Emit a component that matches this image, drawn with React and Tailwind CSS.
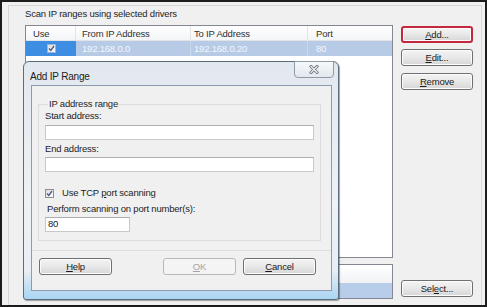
import React from "react";

// Win7 style push button
const Btn = ({ children, className = "", disabled = false }) => (
  <div
    className={`flex items-center justify-center rounded-[3px] border text-[9.5px] leading-none ${
      disabled
        ? "border-[#b5b9bd] bg-[#f4f4f4] text-[#a3a3a3]"
        : "border-[#707070] bg-linear-to-b from-[#f4f4f4] via-[#e8e8e8] to-[#d6d6d6] text-[#1a1a1a] shadow-[inset_0_0_0_1px_#fcfcfc]"
    } ${className}`}
  >
    {children}
  </div>
);

const Check = ({ className = "" }) => (
  <div
    className={`flex h-[9px] w-[9px] items-center justify-center border border-[#8e8f8f] bg-linear-to-br from-[#dcdcdc] to-[#fbfbfb] ${className}`}
  >
    <svg width="7" height="7" viewBox="0 0 7 7">
      <path d="M1 3.6 L2.8 5.4 L6 1" fill="none" stroke="#4a5b8c" strokeWidth="1.4" />
    </svg>
  </div>
);

const Input = ({ value, className = "" }) => (
  <div
    className={`flex h-[15px] items-center border border-[#c5c8cc] border-t-[#abadb3] bg-white pl-[2px] text-[9.5px] text-[#1a1a1a] ${className}`}
  >
    {value}
  </div>
);

const u = (s) => <span className="underline underline-offset-[1px]">{s}</span>;

const App = () => {
  return (
    <div className="relative h-[307px] w-[487px] overflow-hidden border-2 border-[#1c1c1c] bg-[#f0f0f0] font-[Liberation_Sans,Arial,sans-serif] tracking-[-0.2px] text-[#1e1e1e]">
      {/* Outer panel */}
      <div className="ml-[6px] mt-[3px] flex h-[302px] w-[474px] flex-col border border-[#d8d8d8] pl-[16px]">
        <div className="h-[16px] text-[9.5px] leading-[16px] text-[#1e1e1e]">
          Scan IP ranges using selected drivers
        </div>
        <div className="mt-[3px] flex gap-[8px]">
          {/* Left: lists */}
          <div className="flex w-[368px] flex-col gap-[6px]">
            <div className="flex h-[233px] flex-col border border-[#828790] bg-white">
              {/* Header */}
              <div className="flex h-[15px] border-b border-[#e2e3e5] bg-linear-to-b from-white to-[#f4f5f7] text-[9.5px] leading-[15px] text-[#303030]">
                <div className="w-[50px] border-r border-[#e3e4e6] pl-[7px]">Use</div>
                <div className="w-[115px] border-r border-[#e3e4e6] pl-[6px]">From IP Address</div>
                <div className="w-[117px] border-r border-[#e3e4e6] pl-[3px]">To IP Address</div>
                <div className="flex-1 pl-[8px]">Port</div>
              </div>
              {/* Selected row */}
              <div className="flex h-[15px] bg-[#b7cbe7] text-[9.5px] leading-[15px] text-[#f3f6fb]">
                <div className="flex w-[50px] items-center justify-center bg-[#3d8de2]">
                  <Check className="border-[#9bb5d6]" />
                </div>
                <div className="w-[115px] border-r border-[#c9d8ec] pl-[6px]">192.168.0.0</div>
                <div className="w-[117px] border-r border-[#c9d8ec] pl-[3px]">192.168.0.20</div>
                <div className="flex-1 pl-[8px]">80</div>
              </div>
            </div>
            <div className="flex h-[35px] flex-col border border-[#828790] bg-white">
              <div className="h-[18px] bg-linear-to-b from-white to-[#f1f2f4]" />
              <div className="h-[15px] bg-[#b7cde9]" />
            </div>
          </div>
          {/* Right: buttons */}
          <div className="flex w-[72px] flex-col">
            <Btn className="mt-[1px] h-[17px] border-2 !border-[#c3283c]">{u("A")}dd...</Btn>
            <Btn className="mt-[6px] h-[17px]">{u("E")}dit...</Btn>
            <Btn className="mt-[7px] h-[17px]">{u("R")}emove</Btn>
            <Btn className="mt-[190px] h-[17px]">
              Sel{u("e")}ct...
            </Btn>
          </div>
        </div>
      </div>

      {/* Add IP Range dialog window */}
      <div className="absolute left-[21px] top-[59px] flex h-[239px] w-[316px] flex-col rounded-t-[6px] rounded-b-[3px] border border-[#5d6c7d] bg-[linear-gradient(180deg,#e2e8ef_0%,#eef2f6_60%,#e8eef4_88%,#a9d5f2_100%)] shadow-[1px_1px_1px_rgba(0,0,0,0.35)]">
        <div className="flex h-[23px] justify-between pl-[6px] pr-[4px]">
          <span className="mt-[9px] text-[10px] leading-[11px] text-[#1b1b1b]">Add IP Range</span>
          <div className="-mt-px flex h-[17px] w-[40px] items-center justify-center rounded-b-[4px] border border-[#8f9aa7] bg-linear-to-b from-[#f7f9fb] to-[#e3e8ee]">
            <svg width="10" height="9" viewBox="0 0 10 9">
              <path d="M2 1.5 L8 7.5 M8 1.5 L2 7.5" stroke="#6f7780" strokeWidth="3" strokeLinecap="square" />
              <path d="M2 1.5 L8 7.5 M8 1.5 L2 7.5" stroke="#f6f6f6" strokeWidth="1.2" strokeLinecap="square" />
            </svg>
          </div>
        </div>
        {/* Client area */}
        <div className="mb-[8px] ml-[7px] mr-[6px] flex flex-1 flex-col border border-[#8c9bad] bg-[#f0f0f0]">
          <fieldset className="ml-[6px] mr-[10px] mt-[13px] border border-[#dcdcdc] px-[6px] pb-[8px]">
            <legend className="ml-[3px] px-[1px] text-[9.5px] leading-[10px] text-[#1e1e1e]">IP address range</legend>
            <div className="mt-[1px] h-[12px] text-[9.5px] leading-[12px]">Start address:</div>
            <Input className="mt-[3px]" />
            <div className="mt-[3px] h-[12px] text-[9.5px] leading-[12px]">End address:</div>
            <Input className="mt-[2px]" />
            <div className="mt-[15px] flex h-[13px] items-center gap-[8px] text-[9.5px]">
              <Check />
              <span>Use TCP {u("p")}ort scanning</span>
            </div>
            <div className="mt-[3px] h-[12px] pl-[2px] text-[9.5px] leading-[12px]">Perform scanning on port number(s):</div>
            <Input className="mt-[2px] w-[85px]" value="80" />
          </fieldset>
          <div className="mt-[9px] flex flex-1 gap-[7px] border-t border-[#dedede] pl-[7px] pr-[14px] pt-[7px]">
            <Btn className="h-[17px] w-[73px]">{u("H")}elp</Btn>
            <Btn className="ml-[44px] h-[17px] w-[73px]" disabled>
              {u("O")}K
            </Btn>
            <Btn className="h-[17px] w-[73px]">{u("C")}ancel</Btn>
          </div>
        </div>
      </div>
    </div>
  );
};

export default App;
